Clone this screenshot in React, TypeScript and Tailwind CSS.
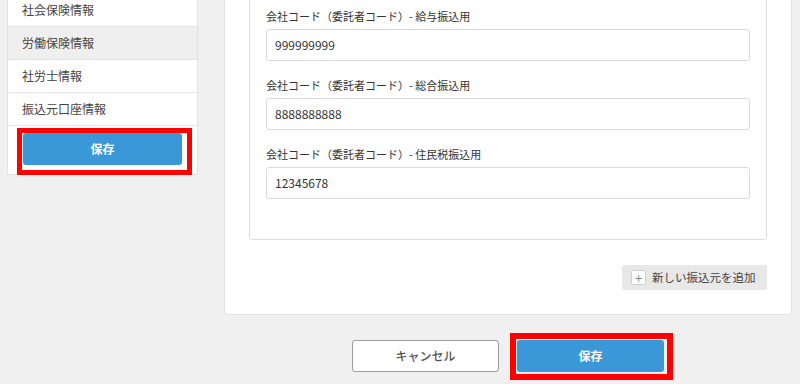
import React from "react";

const font = { fontFamily: '"Noto Sans CJK JP", "Noto Sans", sans-serif' };

function Field({ label, value }: { label: string; value: string }) {
  return (
    <div className="flex flex-col">
      <div className="h-[16px] text-[11px] leading-[16px] text-[#333]">{label}</div>
      <div className="mt-[5px] h-[32px] rounded-[3px] border border-[#d9d9d9] bg-white px-[8px] flex items-center text-[12px] text-[#333]">
        {value}
      </div>
    </div>
  );
}

export default function App() {
  const items = ["社会保険情報", "労働保険情報", "社労士情報", "振込元口座情報"];
  return (
    <div style={font} className="h-[384px] w-[800px] overflow-hidden bg-[#f0f0f0] flex items-start">
      {/* Sidebar */}
      <div className="ml-[7px] w-[191px] -mt-[6px] bg-white border border-t-0 border-[#e2e2e2] rounded-b-[3px]">
        {items.map((t, i) => (
          <div
            key={t}
            className={`h-[33px] border-b border-[#e4e4e4] pl-[14px] flex items-center text-[12px] text-[#444] ${
              i === 1 ? "bg-[#efefef]" : "bg-white"
            }`}
          >
            {t}
          </div>
        ))}
        <div className="pt-[7px] pb-[9px] px-[15px]">
          <button className="relative h-[32px] w-[159px] rounded-[3px] bg-[#3a98d9] text-white text-[12px] font-bold">
            保存
            <span className="pointer-events-none absolute -left-[6px] -right-[10px] -top-[5px] -bottom-[10px] border-[5px] border-[#ff0000]" />
          </button>
        </div>
      </div>

      {/* Main */}
      <div className="ml-[26px] w-[568px] flex flex-col">
        <div className="-mt-[40px] bg-white border border-[#e2e2e2] rounded-[3px] px-[24px] pt-[24px] pb-[24px]">
          <div className="border border-[#dedede] rounded-[3px] px-[16px] pt-[22px] pb-[40px] flex flex-col gap-[16px]">
            <Field label="会社コード（委託者コード）- 給与振込用" value="999999999" />
            <Field label="会社コード（委託者コード）- 総合振込用" value="8888888888" />
            <Field label="会社コード（委託者コード）- 住民税振込用" value="12345678" />
          </div>
          <div className="mt-[25px] flex justify-end">
            <div className="h-[25px] w-[145px] bg-[#e8e8e8] rounded-[2px] flex items-center pl-[9px]">
              <span className="h-[15px] w-[15px] bg-white border border-[#d0d0d0] rounded-[2px] flex items-center justify-center text-[#888] text-[13px] leading-none">
                +
              </span>
              <span className="ml-[6px] text-[11.5px] text-[#444]">新しい振込元を追加</span>
            </div>
          </div>
        </div>
        <div className="mt-[25px] flex justify-center gap-[18px]">
          <button className="h-[32px] w-[147px] rounded-[3px] border border-[#9a9a9a] bg-white text-[12px] text-[#555] font-medium">
            キャンセル
          </button>
          <button className="relative h-[32px] w-[147px] rounded-[3px] bg-[#3a98d9] text-white text-[12px] font-bold">
            保存
            <span className="pointer-events-none absolute -left-[7px] -right-[9px] -top-[7px] -bottom-[8px] border-[6px] border-[#ff0000]" />
          </button>
        </div>
      </div>
    </div>
  );
}
